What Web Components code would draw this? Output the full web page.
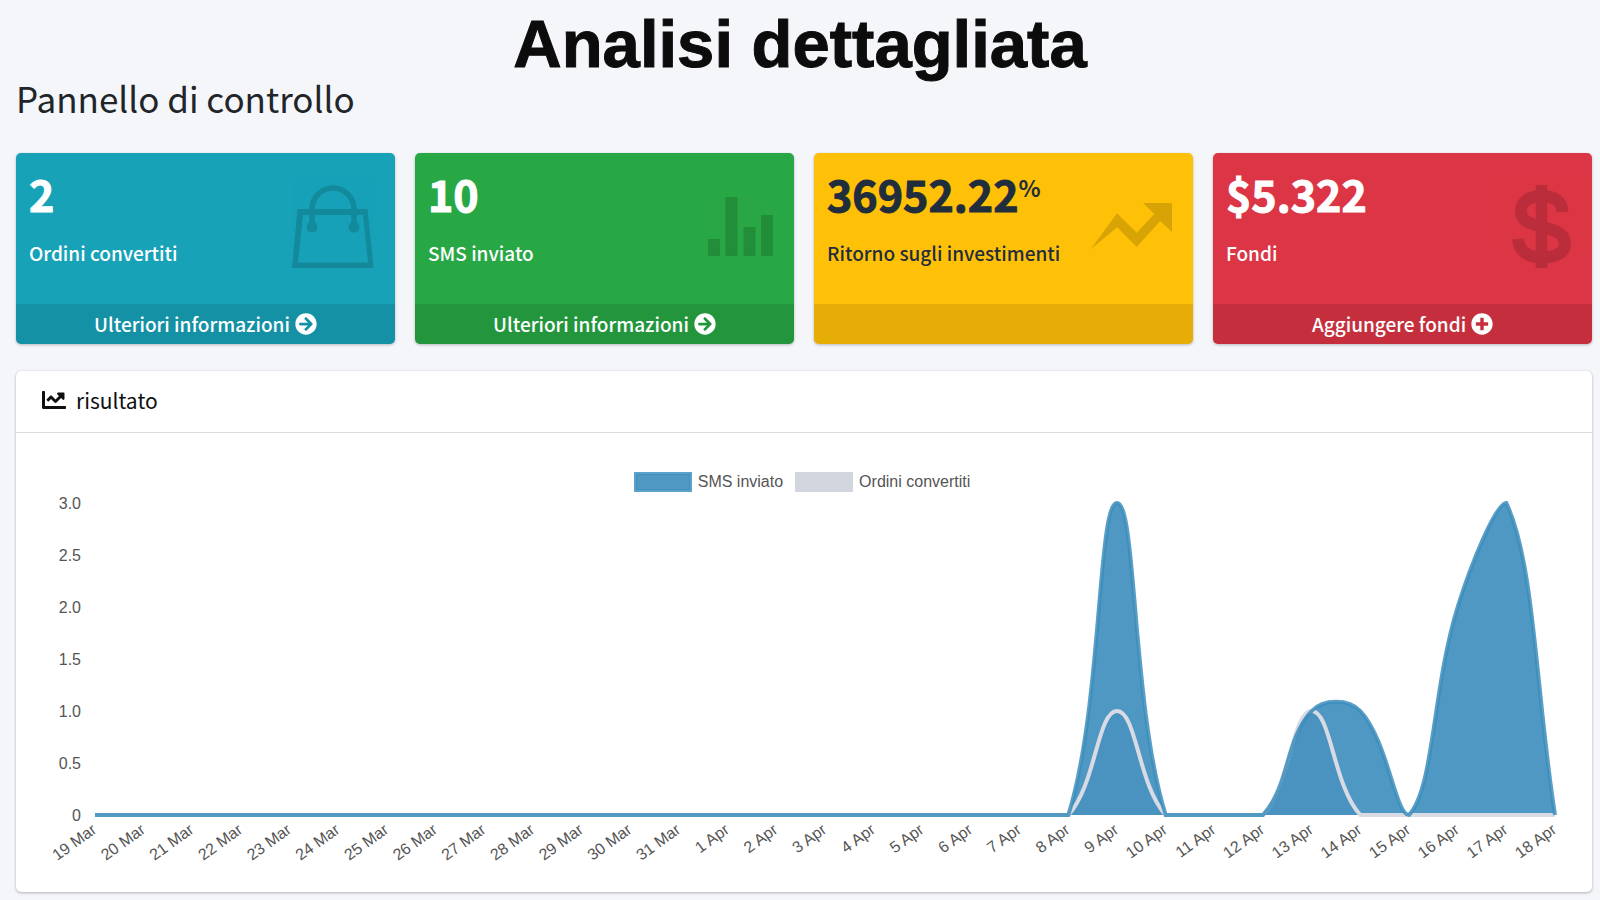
<!DOCTYPE html>
<html lang="it">
<head>
<meta charset="utf-8">
<meta name="viewport" content="width=device-width, initial-scale=1">
<title>Analisi dettagliata</title>
<style>
body { margin: 0; background: #f4f6f9; color: #212529; font-family: "Noto Sans CJK SC", "Noto Sans", sans-serif; font-size: 19px; line-height: 30px; }
</style>
</head>
<body>
<dashboard-page>
  <span slot="title">Analisi dettagliata</span>
  <span slot="subtitle">Pannello di controllo</span>
  <stat-card tone="info" icon="bag" action="Ulteriori informazioni" action-icon="arrow">2<span slot="label">Ordini convertiti</span></stat-card>
  <stat-card tone="success" icon="bars" action="Ulteriori informazioni" action-icon="arrow">10<span slot="label">SMS inviato</span></stat-card>
  <stat-card tone="warning" icon="trend" unit="%">36952.22<span slot="label">Ritorno sugli investimenti</span></stat-card>
  <stat-card tone="danger" icon="dollar" action="Aggiungere fondi" action-icon="plus">$5.322<span slot="label">Fondi</span></stat-card>
  <chart-panel slot="panel"><span slot="heading">risultato</span><area-chart></area-chart></chart-panel>
</dashboard-page>
<script>
const ICONS = {
  bag: '<svg viewBox="0 0 84 84"><path fill-rule="evenodd" d="M7.5 24H77.5L83.5 83H2ZM13 30 8 77.5H78L73 30Z"/><path d="M22 42V24a21 21 0 0 1 42 0V42" fill="none" stroke="currentColor" stroke-width="5.5"/><circle cx="22" cy="42" r="5.5"/><circle cx="64" cy="42" r="5.5"/></svg>',
  bars: '<svg viewBox="0 0 84 84"><path d="M19 54h12v17H19zM36.5 12h12v59h-12zM54.500 42h12v29h-12zM72 30h12v41H72z"/></svg>',
  trend: '<svg viewBox="0 0 84 84"><path d="M2.700 64.300 29 28.300 48.700 47.700 66.300 29 55 18H84V47L72.300 36 48.700 62 29.300 42.300Z"/></svg>',
  dollar: '<svg viewBox="0 0 84 84"><path d="M48.700 0H60.300V83H48.700Z"/><path d="M75.500 27C75 16 67 11 55 11 42 11 34 17 34 26 34 36 43 39 55 42 68 45 78 48 78 59 78 68 68 72.500 55 72.500 41 72.500 32 66 31 54" fill="none" stroke="currentColor" stroke-width="12"/></svg>',
  arrow: '<svg viewBox="0 0 512 512"><path d="M256 8c137 0 248 111 248 248S393 504 256 504 8 393 8 256 119 8 256 8zm-28.900 143.600l75.500 72.400H120c-13.300 0-24 10.700-24 24v16c0 13.300 10.700 24 24 24h182.600l-75.500 72.400c-9.700 9.300-9.900 24.800-.4 34.300l11 10.900c9.400 9.400 24.600 9.400 33.900 0L404.300 273c9.400-9.400 9.400-24.600 0-33.900L271.600 106.300c-9.400-9.400-24.600-9.400-33.900 0l-11 10.900c-9.500 9.600-9.300 25.100.4 34.400z"/></svg>',
  plus: '<svg viewBox="0 0 512 512"><path d="M256 8C119 8 8 119 8 256s111 248 248 248 248-111 248-248S393 8 256 8zm144 276c0 6.600-5.400 12-12 12h-92v92c0 6.600-5.400 12-12 12h-56c-6.600 0-12-5.400-12-12v-92h-92c-6.600 0-12-5.400-12-12v-56c0-6.600 5.400-12 12-12h92v-92c0-6.600 5.400-12 12-12h56c6.600 0 12 5.400 12 12v92h92c6.600 0 12 5.400 12 12v56z"/></svg>',
  line: '<svg viewBox="0 0 512 512"><path d="M496 384H64V80c0-8.840-7.160-16-16-16H16C7.160 64 0 71.160 0 80v336c0 17.670 14.330 32 32 32h464c8.840 0 16-7.160 16-16v-32c0-8.840-7.160-16-16-16zM464 96H345.940c-21.380 0-32.090 25.850-16.970 40.970l32.400 32.400L288 242.750l-73.370-73.370c-12.500-12.500-32.760-12.500-45.250 0l-68.690 68.690c-6.250 6.250-6.250 16.380 0 22.630l22.620 22.620c6.250 6.250 16.380 6.250 22.630 0L192 237.250l73.370 73.370c12.500 12.500 32.760 12.500 45.250 0l96-96 32.400 32.400c15.120 15.120 40.970 4.410 40.970-16.970V112c.01-8.840-7.150-16-16-16z"/></svg>'
};

class UiIcon extends HTMLElement {
  connectedCallback() {
    if (this.shadowRoot) return;
    this.attachShadow({ mode: 'open' }).innerHTML =
      `<style>:host { display: block; flex: none; } svg { display: block; width: 100%; height: 100%; fill: currentColor; }</style>${ICONS[this.getAttribute('name')]}`;
    this.setAttribute('aria-hidden', 'true');
  }
}

class DashboardPage extends HTMLElement {
  constructor() {
    super();
    this.attachShadow({ mode: 'open' }).innerHTML = `
      <style>
        :host { display: block; padding: 6px 8px 8px 16px; }
        h1, h2 { margin: 0; }
        h1 { font: bold 67px/76px "Liberation Sans", Arial, sans-serif; color: #0c0c0d; text-align: center; padding-right: 8px; -webkit-text-stroke: 1px currentColor; }
        h2 { font-size: 35px; font-weight: 400; line-height: 32px; margin-bottom: 39px; }
        section { display: grid; grid-template-columns: repeat(4, 1fr); gap: 20px; margin-bottom: 27px; }
      </style>
      <main>
        <h1><slot name="title"></slot></h1>
        <h2><slot name="subtitle"></slot></h2>
        <section><slot></slot></section>
        <slot name="panel"></slot>
      </main>`;
  }
}

class StatCard extends HTMLElement {
  connectedCallback() {
    if (this.shadowRoot) return;
    const action = this.getAttribute('action');
    const unit = this.getAttribute('unit');
    this.attachShadow({ mode: 'open' }).innerHTML = `
      <style>
        :host { display: flex; flex-direction: column; border-radius: 5px; overflow: hidden; color: #fff; font-weight: 500; box-shadow: 0 1px 3px rgba(0, 0, 0, .25); }
        :host([tone=info]) { background: #17a2b8; }
        :host([tone=success]) { background: #28a745; }
        :host([tone=warning]) { background: #ffc107; color: #1f2d3d; }
        :host([tone=danger]) { background: #dc3545; }
        .body { display: flex; justify-content: space-between; padding: 14px 21px 14px 13px; height: 123px; }
        h3 { display: flex; margin: 0 0 22px; font-size: 43px; font-weight: 700; line-height: 52px; white-space: nowrap; -webkit-text-stroke: 1px currentColor; }
        sup { font-size: 23px; line-height: 40px; font-weight: 700; -webkit-text-stroke: 0; }
        p { margin: 0; line-height: 24px; }
        .body ui-icon { width: 84px; height: 84px; margin-top: 18px; color: #000; opacity: .15; }
        footer { height: 40px; background: rgba(0, 0, 0, .1); }
        a { display: flex; justify-content: center; align-items: center; gap: 5px; height: 40px; color: #fff; text-decoration: none; }
        a ui-icon { width: 22px; height: 22px; }
      </style>
      <div class="body">
        <div><h3><slot></slot>${unit ? `<sup>${unit}</sup>` : ''}</h3><p><slot name="label"></slot></p></div>
        <ui-icon name="${this.getAttribute('icon')}"></ui-icon>
      </div>
      <footer>${action ? `<a href="#">${action}<ui-icon name="${this.getAttribute('action-icon')}"></ui-icon></a>` : ''}</footer>`;
  }
}

class ChartPanel extends HTMLElement {
  constructor() {
    super();
    this.attachShadow({ mode: 'open' }).innerHTML = `
      <style>
        :host { display: block; background: #fff; border-radius: 5px; box-shadow: 0 0 1px rgba(0, 0, 0, .2), 0 1px 3px rgba(0, 0, 0, .25); }
        header { display: flex; align-items: center; gap: 10px; height: 58px; padding: 0 26px 3px; border-bottom: 1px solid #dcdddf; color: #0e0f10; }
        header ui-icon { width: 24px; height: 24px; }
        h3 { margin: 0; font-size: 21px; font-weight: 400; line-height: 30px; }
        div { padding: 39px 25px 12px; }
      </style>
      <header><ui-icon name="line"></ui-icon><h3><slot name="heading"></slot></h3></header>
      <div><slot></slot></div>`;
  }
}

class AreaChart extends HTMLElement {
  constructor() {
    super();
    this.attachShadow({ mode: 'open' }).innerHTML = `
      <style>
        :host { display: block; color: #555; font: 16px/20px "Liberation Sans", Arial, sans-serif; }
        ul { display: flex; justify-content: center; gap: 12px; margin: 0; padding: 0 4px 0 0; list-style: none; }
        li { display: flex; gap: 6px; }
        i { box-sizing: border-box; width: 58px; height: 20px; background: #d2d6de; }
        i.sms { background: #5098c4; border: 2px solid #5ca1c9; outline: 1px solid #4490c0; outline-offset: -3px; }
        svg { display: block; width: 100%; height: 388px; }
        text { fill: #555; }
      </style>
      <ul><li><i class="sms"></i>SMS inviato</li><li><i></i>Ordini convertiti</li></ul>
      <svg role="img" aria-label="SMS inviato e ordini convertiti per giorno"></svg>`;
    this.labels = [];
    for (let d = 19; d <= 31; d++) this.labels.push(d + ' Mar');
    for (let d = 1; d <= 18; d++) this.labels.push(d + ' Apr');
    const series = days => this.labels.map(l => days[l] || 0);
    this.sms = series({ '9 Apr': 3, '13 Apr': 1, '14 Apr': 1, '16 Apr': 2, '17 Apr': 3 });
    this.orders = series({ '9 Apr': 1, '13 Apr': 1 });
  }
  connectedCallback() {
    this.draw();
    new ResizeObserver(() => this.draw()).observe(this);
  }
  draw() {
    const svg = this.shadowRoot.querySelector('svg');
    const left = 54, top = 11, bottom = 323;
    const right = Math.max(left + 100, this.clientWidth - 12);
    const step = (right - left) / (this.labels.length - 1);
    const x = i => left + i * step;
    const y = v => bottom - v * (bottom - top) / 3;
    const clamp = v => Math.min(bottom, Math.max(top, v));
    // Smooth line through the values, its control points kept inside the plot area.
    const curve = data => {
      const pts = data.map((v, i) => [x(i), y(v)]);
      const ctrl = pts.map((p, i) => {
        const a = pts[i - 1] || p, b = pts[i + 1] || p;
        const d0 = Math.hypot(p[0] - a[0], p[1] - a[1]), d1 = Math.hypot(b[0] - p[0], b[1] - p[1]);
        const f0 = .4 * d0 / (d0 + d1), f1 = .4 * d1 / (d0 + d1);
        return {
          before: [p[0] - f0 * (b[0] - a[0]), clamp(p[1] - f0 * (b[1] - a[1]))],
          after: [p[0] + f1 * (b[0] - a[0]), clamp(p[1] + f1 * (b[1] - a[1]))]
        };
      });
      return 'M' + pts[0] + pts.slice(1).map((p, i) => `C${ctrl[i].after} ${ctrl[i + 1].before} ${p}`).join('');
    };
    const sms = curve(this.sms), orders = curve(this.orders);
    const close = `L${right} ${bottom}L${left} ${bottom}Z`;
    const yTicks = ['0', '0.5', '1.0', '1.5', '2.0', '2.5', '3.0']
      .map(t => `<text x="${left - 14}" y="${y(+t)}" dy="6" text-anchor="end">${t}</text>`).join('');
    const xTicks = this.labels
      .map((t, i) => `<text transform="translate(${x(i) - 1} 335) rotate(-36)" dy="6" text-anchor="end">${t}</text>`).join('');
    svg.innerHTML = `
      <path d="${sms + close}" fill="#5098c4"/>
      <path d="${orders + close}" fill="#4a92c0"/>
      <path d="${orders}" fill="none" stroke="#d9dbe4" stroke-width="4"/>
      <path d="${sms}" fill="none" stroke="#3c8dbc" stroke-opacity=".85" stroke-width="4"/>
      ${yTicks}${xTicks}`;
  }
}

customElements.define('ui-icon', UiIcon);
customElements.define('dashboard-page', DashboardPage);
customElements.define('stat-card', StatCard);
customElements.define('chart-panel', ChartPanel);
customElements.define('area-chart', AreaChart);
</script>
</body>
</html>
